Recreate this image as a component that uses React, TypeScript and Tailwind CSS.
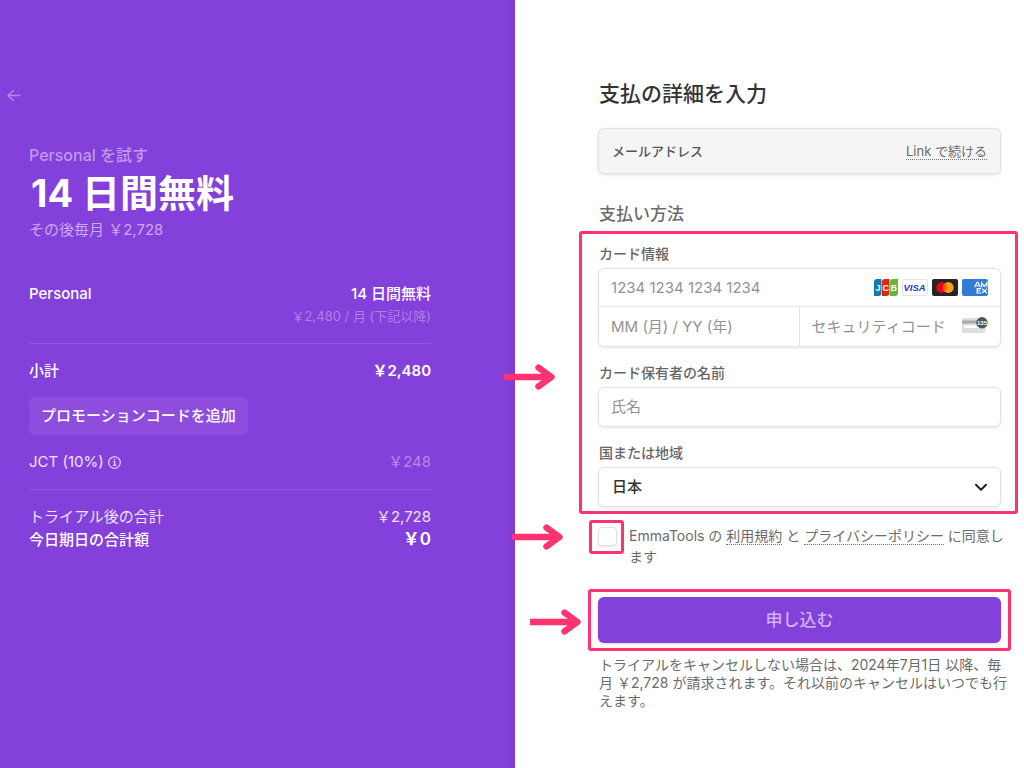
import type { ReactNode } from 'react'

function ArrowMarker({ className }: { className: string }) {
  return (
    <svg className={`absolute h-[26px] w-[52px] ${className}`} viewBox="0 0 52 26" fill="none" stroke="#ff3370" strokeWidth="6.4" aria-hidden="true">
      <path d="M0 13h45" />
      <path d="M34.5 3.6 47.5 13l-13 9.4" strokeLinecap="round" strokeLinejoin="round" />
    </svg>
  )
}

function Highlight({ className }: { className: string }) {
  return <div className={`pointer-events-none absolute rounded-[3px] border-[3px] border-[#ff3370] ${className}`} />
}

function Row({ label, value, className = '' }: { label: ReactNode; value: ReactNode; className?: string }) {
  return (
    <div className={`flex items-center justify-between leading-[22px] ${className}`}>
      <span className="flex items-center gap-1">{label}</span>
      <span>{value}</span>
    </div>
  )
}

function CardBrands() {
  return (
    <div className="flex shrink-0 items-center gap-1">
      <svg className="h-[17px] w-6" viewBox="0 0 24 17" role="img" aria-label="JCB">
        <path d="M3 0h4.5v14a3 3 0 0 1-3 3H0V3a3 3 0 0 1 3-3Z" fill="#0b7cb5" />
        <path d="M11 0h4.5v14a3 3 0 0 1-3 3H8V3a3 3 0 0 1 3-3Z" fill="#d92a10" />
        <path d="M19 0h5v14a3 3 0 0 1-3 3h-5V3a3 3 0 0 1 3-3Z" fill="#67b637" />
        <g fill="#fff" fontFamily="Liberation Sans, sans-serif" fontSize="9" fontWeight="700">
          <text x="1.5" y="11.7">J</text>
          <text x="8.4" y="11.7">C</text>
          <text x="16.6" y="11.7">B</text>
        </g>
      </svg>
      <svg className="h-[17px] w-[26px]" viewBox="0 0 26 17" role="img" aria-label="VISA">
        <rect x=".5" y=".5" width="25" height="16" rx="2" fill="#fff" stroke="#e3e3ea" />
        <text x="12.6" y="12" textAnchor="middle" fill="#2a32c8" fontFamily="Liberation Sans, sans-serif" fontSize="9.5" fontStyle="italic" fontWeight="700">VISA</text>
      </svg>
      <svg className="h-[17px] w-[26px]" viewBox="0 0 26 17" role="img" aria-label="Mastercard">
        <rect width="26" height="17" rx="2" fill="#252525" />
        <circle cx="9.7" cy="8.5" r="5.4" fill="#eb001b" />
        <circle cx="16.3" cy="8.5" r="5.4" fill="#f79e1b" />
        <path d="M13 4.2a5.4 5.4 0 0 1 0 8.6 5.4 5.4 0 0 1 0-8.6Z" fill="#ff5f00" />
      </svg>
      <svg className="h-[17px] w-[26px]" viewBox="0 0 26 17" role="img" aria-label="American Express">
        <rect width="26" height="17" rx="2" fill="#2f7bd6" />
        <g fill="none" stroke="#fff" strokeWidth="1.1">
          <path d="m12.5 8.2 2.5-4.8h1l2.5 4.8M13.8 6.7h3.6M19.7 8.2V3.6l2.6 4 2.6-4v4.6" />
          <path d="M19 9.6h-3.9v4.4H19M15.1 11.8h3.5M20 9.6l5 4.4M25 9.6 20 14" />
        </g>
      </svg>
    </div>
  )
}

function CvcIcon() {
  return (
    <svg className="h-4 w-[26px] shrink-0 -translate-y-0.5" viewBox="0 0 26 16" aria-hidden="true">
      <rect y="1" width="23.5" height="15" rx="1.5" fill="#dedede" />
      <path d="M0 3.5h23.5v3H0z" fill="#a9a9a9" />
      <path d="M2 8.5h15v2.5H2z" fill="#fff" />
      <circle cx="20" cy="5.7" r="5.7" fill="#555" />
      <text x="20" y="8" textAnchor="middle" fill="#fff" fontFamily="Liberation Sans, sans-serif" fontSize="6" fontWeight="700">135</text>
    </svg>
  )
}

const labelClass = 'block pl-px text-sm font-medium leading-5 text-[#666]'
const fieldClass = 'rounded-md border border-[#e3e3e3] bg-white shadow-[0_1px_3px_rgba(0,0,0,0.1)]'
const inputClass = 'w-full min-w-0 bg-transparent text-[15px] text-[#333] outline-none placeholder:text-[#929292]'
const linkClass = 'border-b border-dotted border-[#777]'

export default function App() {
  return (
    <div className="flex min-h-screen bg-white font-['Inter','Noto_Sans_CJK_JP',sans-serif]" lang="ja">
      {/* Order summary */}
      <aside className="w-[50.3%] shrink-0 bg-[#8440da] pt-[88px] pr-[84px] pl-[7px] text-[15px] text-[#eee3fa] shadow-[inset_-12px_0_12px_-12px_rgba(50,0,100,0.12)]">
        <button type="button" aria-label="戻る" className="block h-[14px] w-[14px] text-[#b489ea]">
          <svg viewBox="0 0 14 14" fill="none" stroke="currentColor" strokeWidth="1.4" strokeLinecap="round" strokeLinejoin="round">
            <path d="M13 7.5H1.2M6.3 2.4 1 7.5l5.3 5.1" />
          </svg>
        </button>

        <div className="mt-[41px] pl-[22px]">
          <p className="text-base leading-6 font-medium text-[#c09aed]">Personal を試す</p>
          <h1 className="pl-[2px] text-[38px] leading-[52px] font-bold text-white">14 日間無料</h1>
          <p className="leading-[22px] text-[#c9a9f0]">その後毎月 ￥2,728</p>

          <Row className="mt-[42px] font-medium text-white" label="Personal" value="14 日間無料" />
          <p className="text-right text-[13px] leading-[22px] text-[#ae7fe7]">￥2,480 / 月 (下記以降)</p>

          <hr className="mt-4 border-[#9456df]" />
          <Row className="mt-4 font-medium text-white" label="小計" value={<b className="font-semibold">￥2,480</b>} />
          <button type="button" className="mt-[15px] h-[38px] rounded-md bg-[#8e4ddd] px-3 font-medium text-white">
            プロモーションコードを追加
          </button>
          <Row
            className="mt-4"
            label={
              <>
                JCT (10%)
                <svg className="h-[13px] w-[13px]" viewBox="0 0 13 13" fill="none" stroke="currentColor" strokeWidth="1.1" aria-label="詳細">
                  <circle cx="6.5" cy="6.5" r="5.8" />
                  <path d="M5.1 5.7h1.6v3.6M4.7 9.3h3.8" />
                  <circle cx="6.4" cy="3.6" r=".8" fill="currentColor" stroke="none" />
                </svg>
              </>
            }
            value={<span className="text-[#b688eb]">￥248</span>}
          />

          <hr className="mt-4 border-[#9456df]" />
          <Row className="mt-4" label="トライアル後の合計" value="￥2,728" />
          <Row className="font-medium text-white" label="今日期日の合計額" value={<b className="text-[17px] font-semibold">￥0</b>} />
        </div>
      </aside>

      {/* Payment form */}
      <main className="min-w-0 flex-1 pt-20 pr-[23px] pb-12 pl-[83px] text-sm text-[#6b6b6b]">
        <h2 className="pl-px text-[21px] leading-7 font-medium text-[#333]">支払の詳細を入力</h2>

        <div className="mt-5 flex h-[46px] items-center justify-between rounded-md border border-[#e2e2e2] bg-[#f5f5f5] px-[13px] text-[13px] shadow-[0_1px_3px_rgba(0,0,0,0.12)]">
          <span className="font-medium text-[#555]">メールアドレス</span>
          <a href="#link" className={`${linkClass} leading-4`}>Link で続ける</a>
        </div>

        <h3 className="mt-[30px] pl-px text-[17px] leading-5 font-medium">支払い方法</h3>

        <form>
          <section className="relative mt-5">
            <label htmlFor="card-number" className={labelClass}>カード情報</label>
            <div className={`mt-1 ${fieldClass}`}>
              <div className="flex h-[38px] items-center border-b border-[#e3e3e3] px-3">
                <input id="card-number" className={inputClass} placeholder="1234 1234 1234 1234" />
                <CardBrands />
              </div>
              <div className="grid h-[39px] grid-cols-2">
                <input aria-label="有効期限" className={`${inputClass} border-r border-[#e3e3e3] px-3`} placeholder="MM (月) / YY (年)" />
                <div className="flex items-center px-3">
                  <input aria-label="セキュリティコード" className={inputClass} placeholder="セキュリティコード" />
                  <CvcIcon />
                </div>
              </div>
            </div>

            <label htmlFor="card-name" className={`mt-4 ${labelClass}`}>カード保有者の名前</label>
            <div className={`mt-1 flex h-10 px-3 ${fieldClass}`}>
              <input id="card-name" className={inputClass} placeholder="氏名" />
            </div>

            <label htmlFor="country" className={`mt-4 ${labelClass}`}>国または地域</label>
            <div className={`relative mt-1 h-10 ${fieldClass}`}>
              <select id="country" className="h-full w-full appearance-none bg-transparent px-[13px] text-[15px] font-medium text-[#333] outline-none">
                <option>日本</option>
              </select>
              <svg className="pointer-events-none absolute top-[15px] right-3 h-[9px] w-[14px]" viewBox="0 0 14 9" fill="none" stroke="#222" strokeWidth="2" strokeLinecap="round" strokeLinejoin="round">
                <path d="m2 1.8 5 5 5-5" />
              </svg>
            </div>

            <Highlight className="-top-[13px] -right-[17px] -bottom-[7px] -left-[19px]" />
            <ArrowMarker className="top-[120px] -left-[94px]" />
          </section>

          <section className="relative mt-[18px] flex gap-3">
            <input
              id="terms"
              type="checkbox"
              className="mt-[2px] h-[19px] w-[19px] shrink-0 appearance-none rounded-sm border border-[#e0e0e0] bg-white shadow-[0_1px_2px_rgba(0,0,0,0.1)]"
            />
            <label htmlFor="terms" className="min-w-0 leading-[21px]">
              <span className="whitespace-nowrap">
                EmmaTools の <a href="#terms" className={linkClass}>利用規約</a> と <a href="#privacy" className={linkClass}>プライバシーポリシー</a> に同意し
              </span>
              <br />
              ます
            </label>
            <Highlight className="-top-[5px] -left-[9px] h-[34px] w-[35px]" />
            <ArrowMarker className="-top-[1px] -left-[86px]" />
          </section>

          <section className="relative mt-[30px]">
            <button type="submit" className="h-[46px] w-full rounded-md bg-[#8440da] text-[17px] font-medium text-[#d0b1f1] shadow-[0_1px_3px_rgba(0,0,0,0.15)]">
              申し込む
            </button>
            <Highlight className="-top-2 -right-[10px] -bottom-2 -left-[10px]" />
            <ArrowMarker className="top-3 -left-[68px]" />
          </section>
        </form>

        <p className="mt-[13px] -mr-4 pl-px leading-[18px]">
          トライアルをキャンセルしない場合は、2024年7月1日 以降、毎
          <br />
          月 ￥2,728 が請求されます。それ以前のキャンセルはいつでも行
          <br />
          えます。
        </p>
      </main>
    </div>
  )
}
